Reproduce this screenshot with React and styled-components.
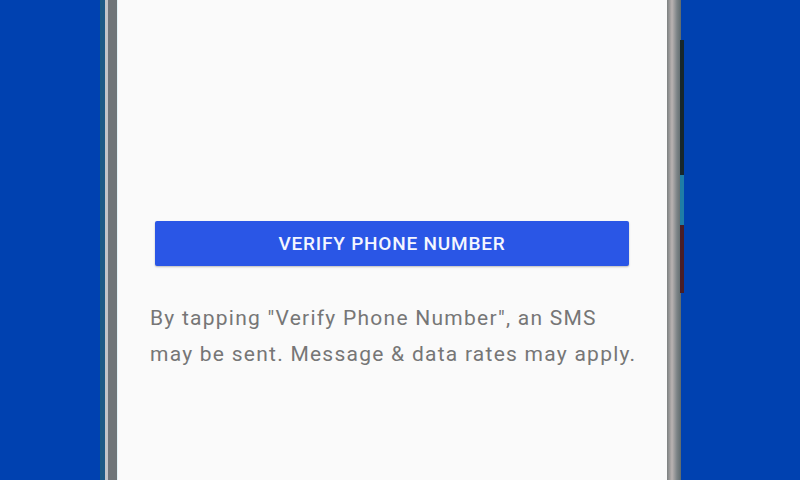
import React from "react";
import styled, { createGlobalStyle } from "styled-components";

const Global = createGlobalStyle`
  *, *::before, *::after {
    box-sizing: border-box;
  }
  html, body {
    margin: 0;
    height: 100%;
    overflow: hidden;
    background: #0041b0;
  }
  #root {
    height: 100%;
  }
`;

const Stage = styled.div`
  height: 480px;
  padding-left: 100px;
  display: flex;
  align-items: stretch;
`;

const Phone = styled.div`
  position: relative;
  width: 581px;
  display: flex;
  background: linear-gradient(
    to right,
    #1d5b86 0,
    #1d5b86 5px,
    #c4c6c8 5px,
    #c4c6c8 8px,
    #6f7578 8px,
    #6f7578 17px,
    #e2f3f6 17px,
    #e2f3f6 18px,
    transparent 18px,
    transparent calc(100% - 14px),
    #7b7f80 calc(100% - 14px),
    #b9b3b2 calc(100% - 9px),
    #7b8386 calc(100% - 4px),
    #5f6a6c 100%
  );
  padding: 0 14px 0 18px;
`;

const SideKey = styled.div`
  position: absolute;
  right: -3px;
  top: ${(p) => p.$top}px;
  height: ${(p) => p.$height}px;
  width: 4px;
  background: ${(p) => p.$color};
`;

const Screen = styled.div`
  flex: 1;
  background: #fafafa;
  padding: 221px 28px 0 32px;
  display: flex;
  flex-direction: column;
  font-family: Roboto, "Noto Sans", sans-serif;
`;

const VerifyButton = styled.button`
  margin: 0 10px 0 5px;
  height: 45px;
  border: none;
  border-radius: 2px;
  background: #2a56e6;
  color: #f4f6ff;
  font-family: Roboto, sans-serif;
  font-weight: 500;
  font-size: 19px;
  letter-spacing: 0.8px;
  text-transform: uppercase;
  box-shadow: 0 1px 2px rgba(0, 0, 0, 0.25);
  cursor: pointer;
`;

const Notice = styled.p`
  margin: 34px 0 0;
  font-size: 21px;
  line-height: 36px;
  color: #767676;
  letter-spacing: 1.25px;
`;

export default function App() {
  return (
    <>
      <Global />
      <Stage>
        <Phone>
          <SideKey $top={40} $height={135} $color="#17272c" />
          <SideKey $top={175} $height={50} $color="#1f7da6" />
          <SideKey $top={225} $height={68} $color="#4a1e26" />
          <Screen>
            <VerifyButton>Verify phone number</VerifyButton>
            <Notice>
              By tapping "Verify Phone Number", an SMS
              <br />
              may be sent. Message &amp; data rates may apply.
            </Notice>
          </Screen>
        </Phone>
      </Stage>
    </>
  );
}
